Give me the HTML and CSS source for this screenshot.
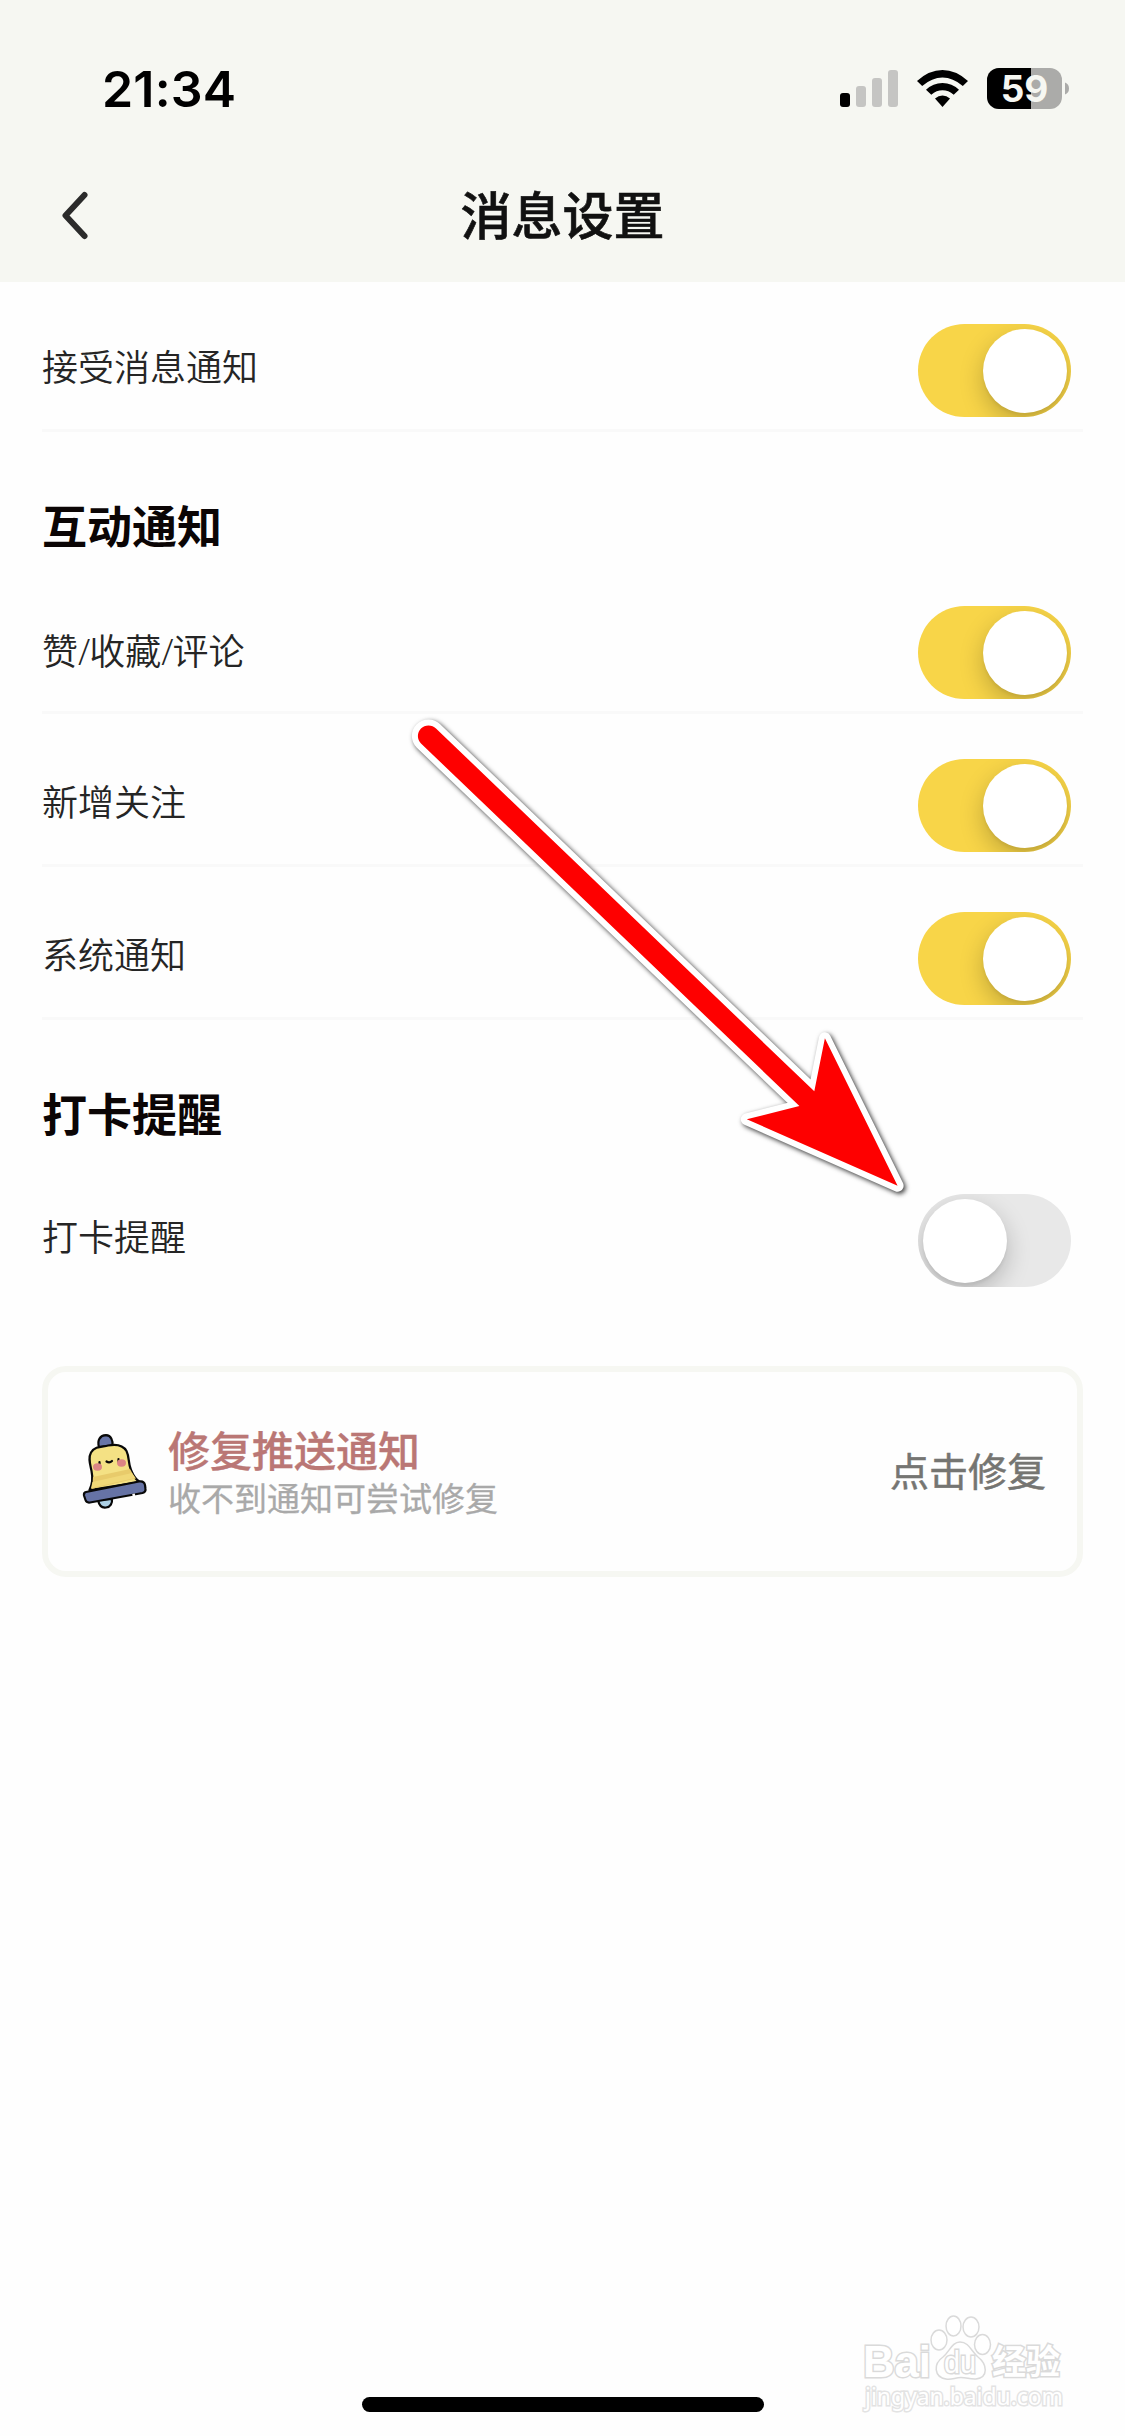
FILE: index.html
```html
<!DOCTYPE html>
<html lang="zh-CN">
<head>
<meta charset="utf-8">
<title>消息设置</title>
<link rel="stylesheet" href="styles.css">
</head>
<body>
<div class="screen">
  <header class="header">
    <div class="status">
      <span class="time">21:34</span>
      <svg class="status-icons" width="232" height="44" viewBox="0 0 232 44">
        <rect x="2" y="26" width="10" height="14" rx="3"/>
        <g fill="#c5c5c3">
          <rect x="18" y="19" width="10" height="21" rx="3"/>
          <rect x="34" y="11" width="10" height="29" rx="3"/>
          <rect x="50" y="3" width="10" height="37" rx="3"/>
        </g>
        <path d="M79 14Q91 3 104.500 3Q118 3 130 14L124.800 19Q115 10.500 104.500 10.500Q94 10.500 84.200 19Z"/>
        <path d="M88 22.800Q95 16 104.500 16Q114 16 121 22.800L115.700 27.700Q110.500 23.300 104.500 23.300Q98.500 23.300 93.300 27.700Z"/>
        <path d="M97 31.500Q100.500 28.400 104.500 28.400Q108.500 28.400 112 31.500L104.500 40Z"/>
        <clipPath id="cell"><rect x="149" y="1" width="75" height="41" rx="12"/></clipPath>
        <g clip-path="url(#cell)">
          <rect x="149" y="1" width="75" height="41" fill="#ababa9"/>
          <rect x="149" y="1" width="44" height="41"/>
        </g>
        <path d="M227 15.500Q231 17 231 21.500Q231 26 227 27.500Z" fill="#ababa9"/>
        <text class="charge" x="186.500" y="34.800">59</text>
      </svg>
    </div>
    <nav class="nav">
      <svg class="back" width="30" height="52" viewBox="0 0 30 52"><path d="M23.500 5L4.500 25.500L23.500 46"/></svg>
      <h1 class="title">消息设置</h1>
    </nav>
  </header>

  <main class="main">
    <section class="row row-first"><span class="label">接受消息通知</span><span class="switch on"></span></section>
    <h2 class="group">互动通知</h2>
    <section class="row"><span class="label label-mixed">赞<i class="slash">/</i>收藏<i class="slash">/</i>评论</span><span class="switch on"></span></section>
    <section class="row"><span class="label">新增关注</span><span class="switch on"></span></section>
    <section class="row"><span class="label">系统通知</span><span class="switch on"></span></section>
    <h2 class="group">打卡提醒</h2>
    <section class="row row-last"><span class="label">打卡提醒</span><span class="switch"></span></section>

    <section class="card">
      <svg class="bell" width="66" height="76" viewBox="0 0 66 76">
        <g stroke="#080808" stroke-width="2.200" stroke-linecap="round" stroke-linejoin="round">
          <path d="M16 66C17 71 20 74 24 73.500C28.500 73 30.500 69 30 65Z" fill="#acd0e5"/>
          <path d="M17 13C15 6 18 1.500 24 1.200C29 1.500 31 6 30.500 12Z" fill="#6875a8"/>
          <path d="M7.500 56C10.500 50 11 44 9.500 37C8 30 6 24 9 18.500C13 12 20 13 26 11.500C34 10 41 11 44.500 17C47.500 23 46 29 49 36C51 41 54 46 58 48Z" fill="#f4e184"/>
          <path d="M11 43L48 35Q51 41 54 44.500L9.500 55Q11 49 11 43Z" fill="#e8cb6b" stroke="none"/>
          <path d="M10.500 48L50 39L53 44L9 54Z" fill="#f0d878" stroke="none"/>
          <path d="M4 58L57 47.500Q62 46.500 63 51L63.500 55Q64 58 60.500 59L8 68.500Q4.500 69 3.500 66L2 61.500Q1.500 58.500 4 58Z" fill="#6673a5"/>
          <path d="M17.500 28v3M36.500 25v3M24.500 27.500q3 2 5.500-.5" fill="none"/>
        </g>
        <path d="M50.500 61.200l2.500-.5" stroke="#fff" stroke-width="2.400"/>
        <ellipse cx="15.500" cy="33" rx="4.500" ry="3.700" fill="#dc8585"/>
        <ellipse cx="39.500" cy="29" rx="4.500" ry="3.700" fill="#dc8585"/>
      </svg>
      <div class="card-text">
        <div class="card-title">修复推送通知</div>
        <div class="card-sub">收不到通知可尝试修复</div>
      </div>
      <span class="card-action">点击修复</span>
    </section>
  </main>

  <div class="home-bar"></div>

  <svg class="pointer" width="510" height="490" viewBox="405 715 510 490">
    <path class="pointer-edge" d="M436 728.500L814.300 1091.300L824.900 1038.300L897.600 1185.700L746.800 1119.300L799.400 1106L421 743.500A10.500 10.500 0 0 1 436 728.500Z"/>
    <path fill="#fe0000" d="M436 728.500L814.300 1091.300L824.900 1038.300L897.600 1185.700L746.800 1119.300L799.400 1106L421 743.500A10.500 10.500 0 0 1 436 728.500Z"/>
  </svg>

  <svg class="watermark" width="220" height="120" viewBox="0 0 220 120">
    <text class="wm-brand" x="3" y="67" textLength="68" lengthAdjust="spacingAndGlyphs">Bai</text>
    <g class="wm-paw">
      <ellipse cx="79" cy="30" rx="8" ry="10"/>
      <ellipse cx="93.500" cy="16" rx="7.500" ry="10"/>
      <ellipse cx="111" cy="17" rx="8" ry="10"/>
      <ellipse cx="122.500" cy="34.500" rx="8" ry="10"/>
      <path d="M100 32C109 32 111 41 118 47C127 54 129 67 116 69C110 69.500 107 67.500 101 67.500C95 67.500 92 70 86 69C74 67 73 54 83 47C90 41 92 32 100 32Z"/>
    </g>
    <text class="wm-du" x="84" y="63" textLength="32" lengthAdjust="spacingAndGlyphs">du</text>
    <text class="wm-cjk" x="132" y="64" textLength="68">经验</text>
    <text class="wm-url" x="5" y="95" textLength="198" lengthAdjust="spacingAndGlyphs">jingyan.baidu.com</text>
  </svg>
</div>
</body>
</html>
```
FILE: styles.css
```css
* { box-sizing: border-box; }
body {
  margin: 0;
  background: #fefefe;
  font-family: "Noto Sans CJK SC", sans-serif;
}
.screen {
  position: relative;
  display: flex;
  flex-direction: column;
  width: 1125px;
  height: 2436px;
  overflow: hidden;
  background: #fefefe;
}
.header { height: 282px; background: #f6f7f2; }
.status {
  display: flex;
  justify-content: space-between;
  align-items: center;
  height: 150px;
  padding: 27px 55px 0 102px;
}
.time { font: 600 50px/60px Inter, sans-serif; letter-spacing: 0.2px; }
.charge {
  font: 700 37px Inter, sans-serif;
  fill: #f6f7f2;
  text-anchor: middle;
}
.nav {
  display: grid;
  grid-template-columns: 100px 1fr 100px;
  align-items: center;
  height: 132px;
}
.back {
  margin-left: 61px;
  fill: none;
  stroke: #2b2b2b;
  stroke-width: 6;
  stroke-linecap: round;
  stroke-linejoin: round;
}
.title {
  margin: 0;
  padding-bottom: 6px;
  color: #111;
  font-size: 51px;
  font-weight: 500;
  line-height: 70px;
  text-align: center;
  -webkit-text-stroke: 0.6px #111;
}
.main { flex: 1; padding: 0 42px; }
.row {
  display: flex;
  justify-content: space-between;
  align-items: flex-end;
  height: 153px;
  padding: 0 12px 12px 0;
  border-bottom: 3px solid #f9f9f9;
}
.row-first { height: 150px; }
.row-last { border-color: transparent; }
.label {
  height: 79px;
  padding-bottom: 25px;
  color: #252525;
  font-size: 36px;
  font-weight: 350;
  line-height: 54px;
}
.label-mixed { height: 77px; padding-bottom: 23px; }
.slash { font: 300 36px/54px "Open Sans", sans-serif; margin-right: -1px; }
.group {
  display: flex;
  align-items: center;
  height: 129px;
  margin: 0;
  padding: 56px 0 0 0;
  color: #0b0505;
  font-size: 45px;
  font-weight: 700;
}
.switch {
  display: flex;
  align-items: center;
  width: 153px;
  height: 93px;
  padding: 0 4.5px;
  overflow: hidden;
  border-radius: 47px;
  background: #e8e8e8;
}
.switch::before {
  content: "";
  width: 84px;
  height: 84px;
  border-radius: 50%;
  background: #fff;
  box-shadow: 0 9px 24px rgba(0, 0, 0, 0.22), 0 3px 3px rgba(0, 0, 0, 0.05);
}
.switch.on { justify-content: flex-end; background: #f8d548; }
.card {
  display: flex;
  align-items: center;
  height: 211px;
  margin-top: 64px;
  padding: 0 31px 0 34px;
  border: 6px solid #f6f7f2;
  border-radius: 24px;
}
.card-text { margin-left: 20px; padding-bottom: 2px; }
.bell { flex: none; }
.card-title {
  color: #ba7775;
  font-size: 42px;
  font-weight: 500;
  line-height: 52px;
  -webkit-text-stroke: 0.3px #ba7775;
}
.card-sub { color: #a9a9a9; font-size: 33px; line-height: 44px; -webkit-text-stroke: 0.3px #a9a9a9; }
.card-action {
  margin-left: auto;
  padding-bottom: 6px;
  color: #757572;
  font-size: 39px;
  -webkit-text-stroke: 0.5px #757572;
}
.home-bar {
  width: 402px;
  height: 15px;
  margin: 0 auto 24px;
  border-radius: 8px;
  background: #000;
}
.pointer { position: absolute; left: 405px; top: 715px; }
.pointer-edge {
  fill: #fff;
  stroke: #fff;
  stroke-width: 12;
  stroke-linejoin: round;
  filter: drop-shadow(2px 2px 2.5px rgba(0, 0, 0, 0.8));
}
.watermark {
  position: absolute;
  left: 860px;
  top: 2310px;
  fill: #fff;
  stroke: #dadada;
  stroke-width: 1.5;
}
.wm-brand, .wm-du, .wm-cjk, .wm-url { paint-order: stroke; stroke-width: 3; }
.wm-brand { font: 700 45px "Liberation Sans", sans-serif; }
.wm-du { font: 400 32px "Liberation Sans", sans-serif; }
.wm-cjk { font: 700 34px "Noto Sans CJK SC", sans-serif; }
.wm-url { font: 400 24px "Noto Sans", sans-serif; stroke: #e3e3e3; }
```
